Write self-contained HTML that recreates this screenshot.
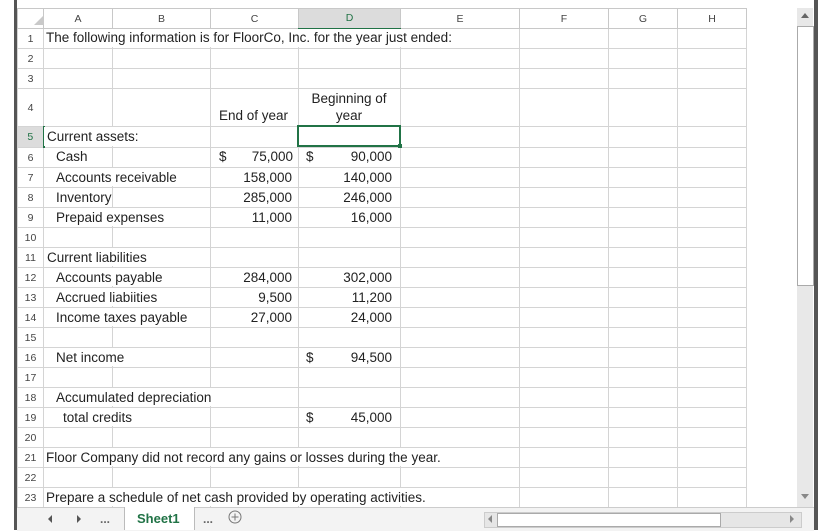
<!DOCTYPE html>
<html><head><style>
body{margin:0;width:835px;height:530px;background:#fff;position:relative;overflow:hidden;font-family:"Liberation Sans",sans-serif;font-size:13.5px;color:#222}
table{position:absolute;left:17px;top:8px;border-collapse:collapse;table-layout:fixed}
td{border:1px solid #d4d4d4;padding:0;font-size:10.5px;color:#444;text-align:center}
tr.h td{background:#fff;border-color:#c8c8c8}
td.rh{background:#fff;font-size:10.5px}
.t{position:absolute;white-space:nowrap;line-height:15px}
.r{text-align:right}
.c{position:absolute;background:#fff;height:18px}
</style></head><body>
<div style="position:absolute;left:14px;top:0;width:3px;height:530px;background:#555"></div>
<div style="position:absolute;left:814px;top:0;width:4px;height:530px;background:#555"></div>
<table>
<colgroup><col style="width:26px"><col style="width:69px"><col style="width:98px"><col style="width:88px"><col style="width:102px"><col style="width:119px"><col style="width:89px"><col style="width:69px"><col style="width:69px"></colgroup>
<tr class="h" style="height:20px"><td style="background:#fff"><svg width="10" height="10" style="position:relative;left:8px;top:3px"><polygon points="10,0 10,10 0,10" fill="#c9c9c9"/></svg></td><td>A</td><td>B</td><td>C</td><td style="background:#dcdcdc;border-bottom:2px solid #217346;color:#217346">D</td><td>E</td><td>F</td><td>G</td><td>H</td></tr>
<tr style="height:20px"><td class="rh">1</td><td></td><td></td><td></td><td></td><td></td><td></td><td></td><td></td></tr>
<tr style="height:20px"><td class="rh">2</td><td></td><td></td><td></td><td></td><td></td><td></td><td></td><td></td></tr>
<tr style="height:20px"><td class="rh">3</td><td></td><td></td><td></td><td></td><td></td><td></td><td></td><td></td></tr>
<tr style="height:38px"><td class="rh">4</td><td></td><td></td><td></td><td></td><td></td><td></td><td></td><td></td></tr>
<tr style="height:21px"><td class="rh" style="background:#dcdcdc;border-right:2px solid #217346;color:#217346">5</td><td></td><td></td><td></td><td></td><td></td><td></td><td></td><td></td></tr>
<tr style="height:20px"><td class="rh">6</td><td></td><td></td><td></td><td></td><td></td><td></td><td></td><td></td></tr>
<tr style="height:20px"><td class="rh">7</td><td></td><td></td><td></td><td></td><td></td><td></td><td></td><td></td></tr>
<tr style="height:20px"><td class="rh">8</td><td></td><td></td><td></td><td></td><td></td><td></td><td></td><td></td></tr>
<tr style="height:20px"><td class="rh">9</td><td></td><td></td><td></td><td></td><td></td><td></td><td></td><td></td></tr>
<tr style="height:20px"><td class="rh">10</td><td></td><td></td><td></td><td></td><td></td><td></td><td></td><td></td></tr>
<tr style="height:20px"><td class="rh">11</td><td></td><td></td><td></td><td></td><td></td><td></td><td></td><td></td></tr>
<tr style="height:20px"><td class="rh">12</td><td></td><td></td><td></td><td></td><td></td><td></td><td></td><td></td></tr>
<tr style="height:20px"><td class="rh">13</td><td></td><td></td><td></td><td></td><td></td><td></td><td></td><td></td></tr>
<tr style="height:20px"><td class="rh">14</td><td></td><td></td><td></td><td></td><td></td><td></td><td></td><td></td></tr>
<tr style="height:20px"><td class="rh">15</td><td></td><td></td><td></td><td></td><td></td><td></td><td></td><td></td></tr>
<tr style="height:20px"><td class="rh">16</td><td></td><td></td><td></td><td></td><td></td><td></td><td></td><td></td></tr>
<tr style="height:20px"><td class="rh">17</td><td></td><td></td><td></td><td></td><td></td><td></td><td></td><td></td></tr>
<tr style="height:20px"><td class="rh">18</td><td></td><td></td><td></td><td></td><td></td><td></td><td></td><td></td></tr>
<tr style="height:20px"><td class="rh">19</td><td></td><td></td><td></td><td></td><td></td><td></td><td></td><td></td></tr>
<tr style="height:20px"><td class="rh">20</td><td></td><td></td><td></td><td></td><td></td><td></td><td></td><td></td></tr>
<tr style="height:20px"><td class="rh">21</td><td></td><td></td><td></td><td></td><td></td><td></td><td></td><td></td></tr>
<tr style="height:20px"><td class="rh">22</td><td></td><td></td><td></td><td></td><td></td><td></td><td></td><td></td></tr>
<tr style="height:20px"><td class="rh">23</td><td></td><td></td><td></td><td></td><td></td><td></td><td></td><td></td></tr>
</table>
<!-- cover cell borders where text overflows -->
<div class="c" style="left:44px;top:29px;width:474px"></div>
<div class="c" style="left:44px;top:127px;width:165px;height:19px"></div>
<div class="c" style="left:44px;top:168px;width:165px"></div>
<div class="c" style="left:44px;top:208px;width:165px"></div>
<div class="c" style="left:44px;top:248px;width:165px"></div>
<div class="c" style="left:44px;top:268px;width:165px"></div>
<div class="c" style="left:44px;top:288px;width:165px"></div>
<div class="c" style="left:44px;top:308px;width:165px"></div>
<div class="c" style="left:44px;top:348px;width:165px"></div>
<div class="c" style="left:44px;top:388px;width:252px"></div>
<div class="c" style="left:44px;top:408px;width:165px"></div>
<div class="c" style="left:44px;top:448px;width:474px"></div>
<div class="c" style="left:44px;top:488px;width:474px"></div>
<div style="position:absolute;left:297px;top:125px;width:100px;height:18px;border:2px solid #217346"></div>
<div style="position:absolute;left:398px;top:144px;width:4px;height:4px;background:#217346"></div>
<!-- scrollbar -->
<div style="position:absolute;left:797px;top:8px;width:16px;height:499px;background:#e8e8e8"></div>
<div style="position:absolute;left:797px;top:26px;width:15px;height:258px;background:#fff;border:1px solid #aaa"></div>
<svg style="position:absolute;left:800px;top:12px" width="10" height="8"><polygon points="5,1 9,6 1,6" fill="#666"/></svg>
<svg style="position:absolute;left:800px;top:492px" width="10" height="8"><polygon points="5,7 9,2 1,2" fill="#888"/></svg>
<!-- tab bar -->
<div style="position:absolute;left:17px;top:507px;width:797px;height:23px;background:#f3f3f3;border-top:1px solid #ccc"></div>
<div style="position:absolute;left:124px;top:507px;width:69px;height:23px;background:#fff;border-left:1px solid #bbb;border-right:1px solid #bbb"></div>
<div class="t" style="left:137px;top:511px;color:#217346;font-weight:bold;font-size:13px">Sheet1</div>
<svg style="position:absolute;left:46px;top:514px" width="40" height="10"><polygon points="6,1 6,9 2,5" fill="#555"/><polygon points="31,1 31,9 35,5" fill="#555"/></svg>
<div class="t" style="left:100px;top:512px;font-weight:bold;color:#666;font-size:12px">...</div>
<div class="t" style="left:203px;top:512px;font-weight:bold;color:#666;font-size:12px">...</div>
<svg style="position:absolute;left:228px;top:510px" width="14" height="14"><circle cx="7" cy="7" r="6" fill="none" stroke="#777"/><path d="M7 3.5V10.5M3.5 7H10.5" stroke="#777"/></svg>
<div style="position:absolute;left:484px;top:512px;width:316px;height:14px;background:#e6e6e6;border:1px solid #ccc"></div>
<div style="position:absolute;left:497px;top:513px;width:222px;height:12px;background:#fff;border:1px solid #aaa"></div>
<svg style="position:absolute;left:486px;top:514px" width="8" height="10"><polygon points="6,1 6,9 2,5" fill="#888"/></svg>
<svg style="position:absolute;left:788px;top:514px" width="8" height="10"><polygon points="2,1 2,9 6,5" fill="#888"/></svg>
<!-- text -->
<div class="t" style="left:46px;top:30px">The following information is for FloorCo, Inc. for the year just ended:</div>
<div class="t" style="left:298px;top:91px;width:102px;text-align:center">Beginning of</div>
<div class="t" style="left:298px;top:108px;width:102px;text-align:center">year</div>
<div class="t r" style="left:190px;top:108px;width:98px">End of year</div>
<div class="t" style="left:47px;top:129px">Current assets:</div>
<div class="t" style="left:56px;top:149px">Cash</div>
<div class="t" style="left:219px;top:149px">$</div><div class="t r" style="left:230px;top:149px;width:63px">75,000</div>
<div class="t" style="left:306px;top:149px">$</div><div class="t r" style="left:320px;top:149px;width:72px">90,000</div>
<div class="t" style="left:56px;top:170px">Accounts receivable</div>
<div class="t r" style="left:230px;top:170px;width:62px">158,000</div><div class="t r" style="left:320px;top:170px;width:72px">140,000</div>
<div class="t" style="left:56px;top:190px">Inventory</div>
<div class="t r" style="left:230px;top:190px;width:62px">285,000</div><div class="t r" style="left:320px;top:190px;width:72px">246,000</div>
<div class="t" style="left:56px;top:210px">Prepaid expenses</div>
<div class="t r" style="left:230px;top:210px;width:62px">11,000</div><div class="t r" style="left:320px;top:210px;width:72px">16,000</div>
<div class="t" style="left:47px;top:250px">Current liabilities</div>
<div class="t" style="left:56px;top:270px">Accounts payable</div>
<div class="t r" style="left:230px;top:270px;width:62px">284,000</div><div class="t r" style="left:320px;top:270px;width:72px">302,000</div>
<div class="t" style="left:56px;top:290px">Accrued liabiities</div>
<div class="t r" style="left:230px;top:290px;width:62px">9,500</div><div class="t r" style="left:320px;top:290px;width:72px">11,200</div>
<div class="t" style="left:56px;top:310px">Income taxes payable</div>
<div class="t r" style="left:230px;top:310px;width:62px">27,000</div><div class="t r" style="left:320px;top:310px;width:72px">24,000</div>
<div class="t" style="left:56px;top:350px">Net income</div>
<div class="t" style="left:306px;top:350px">$</div><div class="t r" style="left:320px;top:350px;width:72px">94,500</div>
<div class="t" style="left:56px;top:390px">Accumulated depreciation</div>
<div class="t" style="left:63px;top:410px">total credits</div>
<div class="t" style="left:306px;top:410px">$</div><div class="t r" style="left:320px;top:410px;width:72px">45,000</div>
<div class="t" style="left:46px;top:450px">Floor Company did not record any gains or losses during the year.</div>
<div class="t" style="left:46px;top:490px">Prepare a schedule of net cash provided by operating activities.</div>
</body></html>
